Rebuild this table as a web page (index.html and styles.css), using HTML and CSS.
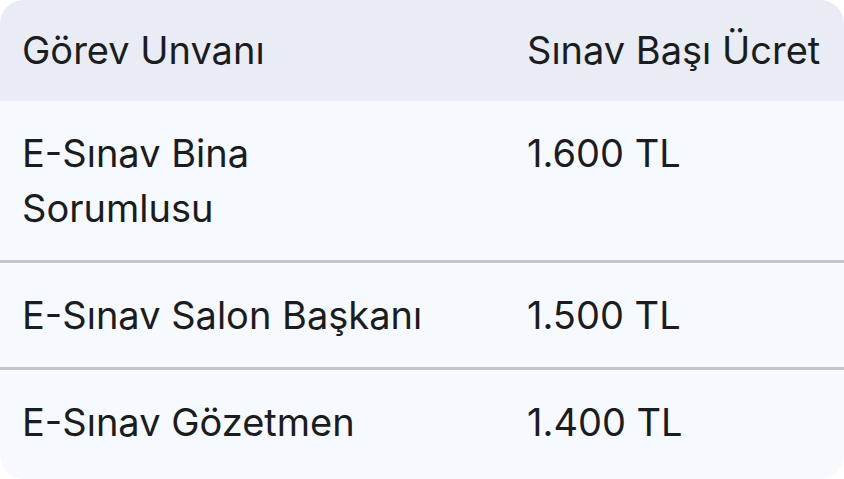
FILE: index.html
```html
<!DOCTYPE html>
<html lang="tr">
<head>
<meta charset="utf-8">
<link rel="stylesheet" href="styles.css">
</head>
<body>
<div class="table">
  <div class="row head">
    <div class="cell c1">Görev Unvanı</div>
    <div class="cell c2">Sınav Başı Ücret</div>
  </div>
  <div class="row">
    <div class="cell c1">E-Sınav Bina Sorumlusu</div>
    <div class="cell c2">1.600 TL</div>
  </div>
  <div class="row">
    <div class="cell c1">E-Sınav Salon Başkanı</div>
    <div class="cell c2">1.500 TL</div>
  </div>
  <div class="row last">
    <div class="cell c1">E-Sınav Gözetmen</div>
    <div class="cell c2">1.400 TL</div>
  </div>
</div>
</body>
</html>
```
FILE: styles.css
```css
html, body {
  margin: 0;
  padding: 0;
  background: #ffffff;
}
body {
  width: 844px;
  height: 479px;
  overflow: hidden;
  font-family: Inter, Roboto, sans-serif;
  color: #1b1c1e;
}
.table {
  width: 844px;
  height: 479px;
  border-radius: 24px;
  overflow: hidden;
  background: #f6f9fd;
}
.row {
  display: grid;
  grid-template-columns: 505px 1fr;
  border-bottom: 3px solid #c2c5c9;
}
.row.head {
  background: #e9ecf4;
  border-bottom: none;
}
.row.last {
  border-bottom: none;
}
.cell {
  font-size: 38px;
  line-height: 55px;
  padding: 25px 22px 24px;
}
.head .cell {
  padding: 23px 22px;
}
.c1 {
  padding-right: 70px;
}
```
